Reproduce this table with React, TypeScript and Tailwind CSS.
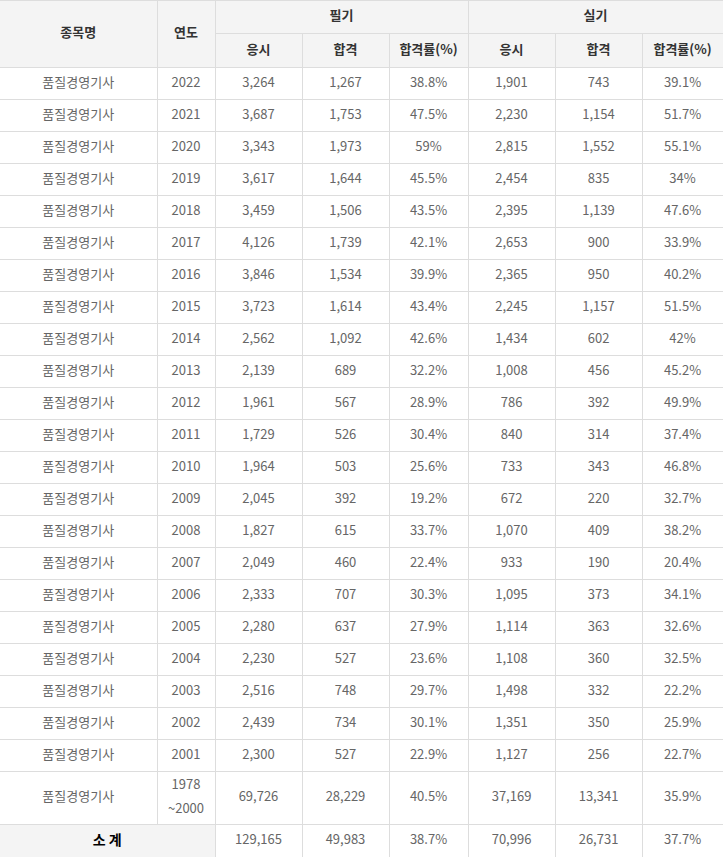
const rows: string[][] = [
  ['2022', '3,264', '1,267', '38.8%', '1,901', '743', '39.1%'],
  ['2021', '3,687', '1,753', '47.5%', '2,230', '1,154', '51.7%'],
  ['2020', '3,343', '1,973', '59%', '2,815', '1,552', '55.1%'],
  ['2019', '3,617', '1,644', '45.5%', '2,454', '835', '34%'],
  ['2018', '3,459', '1,506', '43.5%', '2,395', '1,139', '47.6%'],
  ['2017', '4,126', '1,739', '42.1%', '2,653', '900', '33.9%'],
  ['2016', '3,846', '1,534', '39.9%', '2,365', '950', '40.2%'],
  ['2015', '3,723', '1,614', '43.4%', '2,245', '1,157', '51.5%'],
  ['2014', '2,562', '1,092', '42.6%', '1,434', '602', '42%'],
  ['2013', '2,139', '689', '32.2%', '1,008', '456', '45.2%'],
  ['2012', '1,961', '567', '28.9%', '786', '392', '49.9%'],
  ['2011', '1,729', '526', '30.4%', '840', '314', '37.4%'],
  ['2010', '1,964', '503', '25.6%', '733', '343', '46.8%'],
  ['2009', '2,045', '392', '19.2%', '672', '220', '32.7%'],
  ['2008', '1,827', '615', '33.7%', '1,070', '409', '38.2%'],
  ['2007', '2,049', '460', '22.4%', '933', '190', '20.4%'],
  ['2006', '2,333', '707', '30.3%', '1,095', '373', '34.1%'],
  ['2005', '2,280', '637', '27.9%', '1,114', '363', '32.6%'],
  ['2004', '2,230', '527', '23.6%', '1,108', '360', '32.5%'],
  ['2003', '2,516', '748', '29.7%', '1,498', '332', '22.2%'],
  ['2002', '2,439', '734', '30.1%', '1,351', '350', '25.9%'],
  ['2001', '2,300', '527', '22.9%', '1,127', '256', '22.7%'],
];

// header + body cell styles
const th = 'border border-[#dddddd] bg-[#f4f4f4] font-bold text-[#333333] text-[13px] text-center align-middle px-0 pt-0 pb-[4px]';
const td = 'border border-[#dddddd] text-[#666666] text-[13px] text-center align-middle px-0 pt-0 pb-[4px]';

export default function App() {
  return (
    <div className="w-[723px] bg-white" style={{ fontFamily: '"Noto Sans CJK KR", "Noto Sans", sans-serif' }}>
      <table className="w-[723px] table-fixed border-collapse">
        <colgroup>
          <col className="w-[157px]" />
          <col className="w-[58px]" />
          <col className="w-[87px]" />
          <col className="w-[87px]" />
          <col className="w-[79px]" />
          <col className="w-[87px]" />
          <col className="w-[87px]" />
          <col className="w-[81px]" />
        </colgroup>
        <thead>
          <tr className="h-[33px]">
            <th rowSpan={2} className={th + ' border-l-0'}>종목명</th>
            <th rowSpan={2} className={th}>연도</th>
            <th colSpan={3} className={th}>필기</th>
            <th colSpan={3} className={th}>실기</th>
          </tr>
          <tr className="h-[34px]">
            <th className={th}>응시</th>
            <th className={th}>합격</th>
            <th className={th}>합격률(%)</th>
            <th className={th}>응시</th>
            <th className={th}>합격</th>
            <th className={th}>합격률(%)</th>
          </tr>
        </thead>
        <tbody>
          {rows.map((r) => (
            <tr key={r[0]} className="h-[32px]">
              <td className={td + ' border-l-0'}>품질경영기사</td>
              {r.map((c, i) => (
                <td key={i} className={td}>{c}</td>
              ))}
            </tr>
          ))}
          <tr className="h-[52px]">
            <td className={td + ' border-l-0'}>품질경영기사</td>
            <td className={td + ' leading-[24px]'}>1978<br />~2000</td>
            <td className={td}>69,726</td>
            <td className={td}>28,229</td>
            <td className={td}>40.5%</td>
            <td className={td}>37,169</td>
            <td className={td}>13,341</td>
            <td className={td}>35.9%</td>
          </tr>
          <tr className="h-[33px]">
            <td colSpan={2} className={th + ' border-l-0 text-[14px] text-black'}>소 계</td>
            <td className={td}>129,165</td>
            <td className={td}>49,983</td>
            <td className={td}>38.7%</td>
            <td className={td}>70,996</td>
            <td className={td}>26,731</td>
            <td className={td}>37.7%</td>
          </tr>
        </tbody>
      </table>
    </div>
  );
}
